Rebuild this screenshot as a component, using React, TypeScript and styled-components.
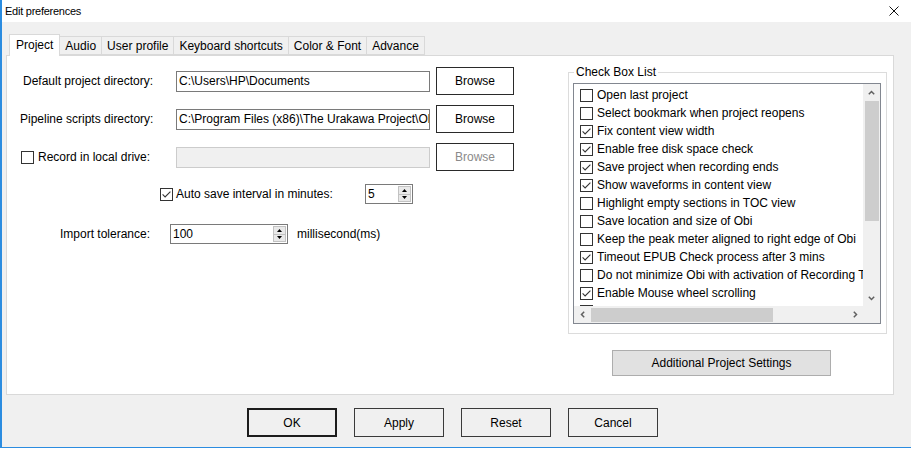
import React from 'react';
import styled, { createGlobalStyle } from 'styled-components';

const GlobalStyle = createGlobalStyle`
  html, body {
    margin: 0;
    padding: 0;
    background: #ffffff;
  }
  body {
    font-family: 'Liberation Sans', Arial, sans-serif;
    font-size: 12px;
    color: #000000;
  }
  * {
    box-sizing: border-box;
  }
`;

const StyledWindow = styled.div`
  width: 911px;
  height: 448px;
  border-left: 2px solid #2b8ce0;
  border-bottom: 1px solid #2b8ce0;
  background: #f0f0f0;
  display: flex;
  flex-direction: column;
  overflow: hidden;
`;

const StyledTitleBar = styled.div`
  flex: none;
  height: 22px;
  background: #ffffff;
  display: flex;
  align-items: center;
  justify-content: space-between;
  padding: 0 12px 0 3px;
`;

const StyledTitle = styled.span`
  font-size: 11px;
  letter-spacing: -0.25px;
  color: #000000;
`;

const StyledBody = styled.div`
  flex: 1;
  display: flex;
  flex-direction: column;
  padding-top: 12px;
`;

const StyledTabStrip = styled.div`
  display: flex;
  align-items: flex-end;
  height: 21px;
  padding-left: 7px;
  position: relative;
  z-index: 1;
`;

const StyledTab = styled.div<{ active?: boolean }>`
  height: ${({ active }) => (active ? '22px' : '19px')};
  margin-bottom: ${({ active }) => (active ? '-1px' : '0')};
  padding: 0 5px;
  display: flex;
  align-items: ${({ active }) => (active ? 'flex-start' : 'center')};
  padding-top: ${({ active }) => (active ? '3px' : '0')};
  border: 1px solid #d9d9d9;
  border-bottom: ${({ active }) => (active ? 'none' : '1px solid #d9d9d9')};
  margin-left: -1px;
  background: ${({ active }) => (active ? '#ffffff' : '#f0f0f0')};
  white-space: nowrap;
  &:first-child {
    margin-left: 0;
    padding: 3px 6px 0;
  }
`;

const StyledPanel = styled.div`
  width: 888px;
  height: 340px;
  margin-left: 4px;
  background: #ffffff;
  border: 1px solid #d9d9d9;
  display: flex;
`;

const StyledFormColumn = styled.div`
  flex: 1;
  display: flex;
  flex-direction: column;
  padding: 11px 0 0 13px;
`;

const StyledFormRow = styled.div`
  display: flex;
  align-items: center;
  height: 28px;
  & + & {
    margin-top: 10px;
  }
`;

const StyledRowLabel = styled.div<{ indent: number }>`
  width: 156px;
  padding-left: ${({ indent }) => indent}px;
  display: flex;
  align-items: center;
  gap: 4px;
  white-space: nowrap;
`;

const StyledPathBox = styled.div<{ disabled?: boolean }>`
  width: 254px;
  height: 21px;
  padding: 0 2px;
  border: 1px solid ${({ disabled }) => (disabled ? '#cccccc' : '#7a7a7a')};
  background: ${({ disabled }) => (disabled ? '#f0f0f0' : '#ffffff')};
  display: flex;
  align-items: center;
  white-space: nowrap;
  overflow: hidden;
`;

const StyledBrowseButton = styled.div<{ disabled?: boolean }>`
  width: 78px;
  height: 28px;
  margin-left: 6px;
  border: 1px solid #2a2a2a;
  display: flex;
  align-items: center;
  justify-content: center;
  color: ${({ disabled }) => (disabled ? '#8a8a8a' : '#000000')};
`;

const StyledSpinRow = styled.div<{ top: number; indent: number }>`
  display: flex;
  align-items: center;
  height: 20px;
  margin-top: ${({ top }) => top}px;
  padding-left: ${({ indent }) => indent}px;
  white-space: nowrap;
`;

const StyledSpinLabel = styled.div<{ width: number }>`
  width: ${({ width }) => width}px;
  display: flex;
  align-items: center;
  gap: 3px;
`;

const StyledNumeric = styled.div<{ width: number }>`
  width: ${({ width }) => width}px;
  height: 20px;
  border: 1px solid #7a7a7a;
  background: #ffffff;
  display: flex;
`;

const StyledNumericValue = styled.div`
  flex: 1;
  padding-left: 2px;
  display: flex;
  align-items: center;
`;

const StyledSpinButtons = styled.div`
  width: 13px;
  margin: 1px 1px 1px 0;
  display: flex;
  flex-direction: column;
`;

const StyledSpinButton = styled.div`
  flex: 1;
  background: #e9e9e9;
  border: 1px solid #c2c2c2;
  display: flex;
  align-items: center;
  justify-content: center;
  & + & {
    border-top: none;
  }
`;

const StyledUnit = styled.span`
  margin-left: 9px;
`;

const StyledSideColumn = styled.div`
  width: 319px;
  margin-right: 6px;
  display: flex;
  flex-direction: column;
  padding-top: 16px;
`;

const StyledGroupBox = styled.div`
  position: relative;
  height: 262px;
  border: 1px solid #dcdcdc;
  padding: 10px 5px 0 4px;
`;

const StyledGroupTitle = styled.span`
  position: absolute;
  top: -8px;
  left: 5px;
  padding: 0 2px;
  line-height: 14px;
  background: #ffffff;
`;

const StyledListBox = styled.div`
  width: 308px;
  height: 241px;
  border: 1px solid #828790;
  background: #ffffff;
  display: grid;
  grid-template-columns: 1fr 17px;
  grid-template-rows: 1fr 17px;
`;

const StyledListItems = styled.div`
  overflow: hidden;
  padding: 2px 0 0 6px;
`;

const StyledListItem = styled.div`
  height: 18px;
  display: flex;
  align-items: center;
  gap: 4px;
  white-space: nowrap;
`;

const StyledScrollBar = styled.div<{ vertical?: boolean }>`
  background: #f0f0f0;
  display: flex;
  flex-direction: ${({ vertical }) => (vertical ? 'column' : 'row')};
`;

const StyledScrollArrow = styled.div`
  flex: none;
  width: 17px;
  height: 17px;
  display: flex;
  align-items: center;
  justify-content: center;
`;

const StyledScrollThumb = styled.div<{ vertical?: boolean; size: number }>`
  flex: none;
  background: #cdcdcd;
  ${({ vertical, size }) =>
    vertical ? `height: ${size}px; margin: 0 1px 0 2px;` : `width: ${size}px; margin: 2px 0 1px 0;`}
`;

const StyledScrollSpace = styled.div`
  flex: 1;
`;

const StyledScrollCorner = styled.div`
  background: #f0f0f0;
`;

const StyledWideButton = styled.div`
  width: 219px;
  height: 26px;
  margin: 16px 0 0 44px;
  background: #e1e1e1;
  border: 1px solid #adadad;
  display: flex;
  align-items: center;
  justify-content: center;
`;

const StyledButtonRow = styled.div`
  display: flex;
  gap: 17px;
  margin-top: 13px;
  padding-left: 245px;
`;

const StyledDialogButton = styled.div<{ primary?: boolean }>`
  width: 90px;
  height: 29px;
  border: ${({ primary }) => (primary ? '2px solid #1c1c1c' : '1px solid #3a3a3a')};
  display: flex;
  align-items: center;
  justify-content: center;
`;

const CheckBox = ({ checked }: { checked?: boolean }) => (
  <svg width="13" height="13" viewBox="0 0 13 13" style={{ flex: 'none' }}>
    <rect x="0.5" y="0.5" width="12" height="12" fill="#ffffff" stroke="#333333" />
    {checked && <path d="M2.6 6.4 L5.1 8.9 L10.4 3.6" fill="none" stroke="#333333" strokeWidth="1.1" />}
  </svg>
);

const Chevron = ({ dir }: { dir: 'up' | 'down' | 'left' | 'right' }) => {
  const paths = {
    up: 'M0.8 4.2 L3.5 1.5 L6.2 4.2',
    down: 'M0.8 1.8 L3.5 4.5 L6.2 1.8',
    left: 'M4.2 0.8 L1.5 3.5 L4.2 6.2',
    right: 'M1.8 0.8 L4.5 3.5 L1.8 6.2',
  };
  const horizontal = dir === 'left' || dir === 'right';
  return (
    <svg width={horizontal ? 6 : 7} height={horizontal ? 7 : 6} viewBox={horizontal ? '0 0 6 7' : '0 0 7 6'}>
      <path d={paths[dir]} fill="none" stroke="#606060" strokeWidth="1.5" />
    </svg>
  );
};

const SpinTriangle = ({ up }: { up?: boolean }) => (
  <svg width="5" height="3" viewBox="0 0 5 3">
    <path d={up ? 'M0 3 L2.5 0 L5 3 Z' : 'M0 0 L2.5 3 L5 0 Z'} fill="#000000" />
  </svg>
);

const NumericBox = ({ value, width }: { value: string; width: number }) => (
  <StyledNumeric width={width}>
    <StyledNumericValue>{value}</StyledNumericValue>
    <StyledSpinButtons>
      <StyledSpinButton>
        <SpinTriangle up />
      </StyledSpinButton>
      <StyledSpinButton>
        <SpinTriangle />
      </StyledSpinButton>
    </StyledSpinButtons>
  </StyledNumeric>
);

const tabs = ['Project', 'Audio', 'User profile', 'Keyboard shortcuts', 'Color & Font', 'Advance'];

const options = [
  { label: 'Open last project', checked: false },
  { label: 'Select bookmark when project reopens', checked: false },
  { label: 'Fix content view width', checked: true },
  { label: 'Enable free disk space check', checked: true },
  { label: 'Save project when recording ends', checked: true },
  { label: 'Show waveforms in content view', checked: true },
  { label: 'Highlight empty sections in TOC view', checked: false },
  { label: 'Save location and size of Obi', checked: false },
  { label: 'Keep the peak meter aligned to right edge of Obi', checked: false },
  { label: 'Timeout EPUB Check process after 3 mins', checked: true },
  { label: 'Do not minimize Obi with activation of Recording Toolbar', checked: false },
  { label: 'Enable Mouse wheel scrolling', checked: true },
  { label: 'Start Obi in maximized state', checked: false },
];

const App = () => {
  return (
    <>
      <GlobalStyle />
      <StyledWindow>
        <StyledTitleBar>
          <StyledTitle>Edit preferences</StyledTitle>
          <svg width="10" height="10" viewBox="0 0 10 10">
            <path d="M0.5 0.5 L9.5 9.5 M9.5 0.5 L0.5 9.5" stroke="#111111" strokeWidth="1" />
          </svg>
        </StyledTitleBar>
        <StyledBody>
          <StyledTabStrip>
            {tabs.map((tab, i) => (
              <StyledTab key={tab} active={i === 0}>
                {tab}
              </StyledTab>
            ))}
          </StyledTabStrip>
          <StyledPanel>
            <StyledFormColumn>
              <StyledFormRow>
                <StyledRowLabel indent={3}>Default project directory:</StyledRowLabel>
                <StyledPathBox>C:\Users\HP\Documents</StyledPathBox>
                <StyledBrowseButton>Browse</StyledBrowseButton>
              </StyledFormRow>
              <StyledFormRow>
                <StyledRowLabel indent={0}>Pipeline scripts directory:</StyledRowLabel>
                <StyledPathBox>C:\Program Files (x86)\The Urakawa Project\Obi\Pipeline-lite</StyledPathBox>
                <StyledBrowseButton>Browse</StyledBrowseButton>
              </StyledFormRow>
              <StyledFormRow>
                <StyledRowLabel indent={1}>
                  <CheckBox />
                  Record in local drive:
                </StyledRowLabel>
                <StyledPathBox disabled />
                <StyledBrowseButton disabled>Browse</StyledBrowseButton>
              </StyledFormRow>
              <StyledSpinRow top={13} indent={140}>
                <StyledSpinLabel width={205}>
                  <CheckBox checked />
                  Auto save interval in minutes:
                </StyledSpinLabel>
                <NumericBox value="5" width={48} />
              </StyledSpinRow>
              <StyledSpinRow top={20} indent={40}>
                <StyledSpinLabel width={110}>Import tolerance:</StyledSpinLabel>
                <NumericBox value="100" width={118} />
                <StyledUnit>millisecond(ms)</StyledUnit>
              </StyledSpinRow>
            </StyledFormColumn>
            <StyledSideColumn>
              <StyledGroupBox>
                <StyledGroupTitle>Check Box List</StyledGroupTitle>
                <StyledListBox>
                  <StyledListItems>
                    {options.map((opt) => (
                      <StyledListItem key={opt.label}>
                        <CheckBox checked={opt.checked} />
                        {opt.label}
                      </StyledListItem>
                    ))}
                  </StyledListItems>
                  <StyledScrollBar vertical>
                    <StyledScrollArrow>
                      <Chevron dir="up" />
                    </StyledScrollArrow>
                    <StyledScrollThumb vertical size={120} />
                    <StyledScrollSpace />
                    <StyledScrollArrow>
                      <Chevron dir="down" />
                    </StyledScrollArrow>
                  </StyledScrollBar>
                  <StyledScrollBar>
                    <StyledScrollArrow>
                      <Chevron dir="left" />
                    </StyledScrollArrow>
                    <StyledScrollThumb size={182} />
                    <StyledScrollSpace />
                    <StyledScrollArrow>
                      <Chevron dir="right" />
                    </StyledScrollArrow>
                  </StyledScrollBar>
                  <StyledScrollCorner />
                </StyledListBox>
              </StyledGroupBox>
              <StyledWideButton>Additional Project Settings</StyledWideButton>
            </StyledSideColumn>
          </StyledPanel>
          <StyledButtonRow>
            <StyledDialogButton primary>OK</StyledDialogButton>
            <StyledDialogButton>Apply</StyledDialogButton>
            <StyledDialogButton>Reset</StyledDialogButton>
            <StyledDialogButton>Cancel</StyledDialogButton>
          </StyledButtonRow>
        </StyledBody>
      </StyledWindow>
    </>
  );
};

export default App;
